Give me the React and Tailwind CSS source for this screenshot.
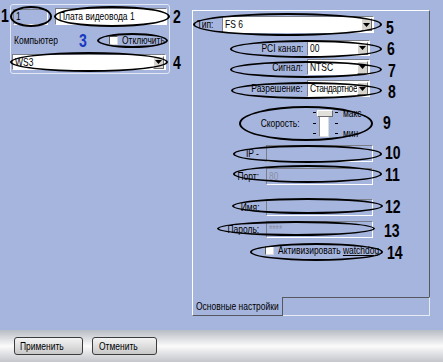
const ui = { fontFamily: '"Liberation Sans", Arial, sans-serif' };

// the reference uses a narrow UI face; squeeze Liberation Sans to match its widths
function T({ children, right, className = '' }) {
  return (
    <span
      className={`inline-block whitespace-nowrap text-[11px] leading-none scale-x-[0.77] ${right ? 'origin-right' : 'origin-left'} ${className}`}
    >
      {children}
    </span>
  );
}

function Sunken({ className = '', children }) {
  return (
    <div className={`shrink-0 border-t border-l border-[#7a7e88] border-b border-r border-b-white border-r-white flex items-center overflow-hidden ${className}`}>
      {children}
    </div>
  );
}

function Select({ value, tight, className = '' }) {
  return (
    <Sunken className={`bg-white ${className}`}>
      <span className="flex-1 min-w-0 pl-[2px] overflow-hidden flex">
        <T className={tight ? 'tracking-[-0.5px]' : ''}>{value}</T>
      </span>
      <span className="shrink-0 w-[11px] h-[13px] mr-[1px] bg-[#d6d4cc] border border-t-white border-l-white border-r-[#6c6c6c] border-b-[#6c6c6c] flex items-center justify-center">
        <svg width="7" height="4" viewBox="0 0 7 4"><path d="M0 0h7L3.5 4z" fill="#000" /></svg>
      </span>
    </Sunken>
  );
}

function Check({ label, className = '' }) {
  return (
    <div className={`shrink-0 flex items-center ${className}`}>
      <span className="shrink-0 w-[9px] h-[9px] bg-white border border-[#5c5c5c] border-b-[#d8d8d8] border-r-[#d8d8d8]" />
      <span className="shrink-0 ml-[4px] flex">
        <T>{label}</T>
      </span>
    </div>
  );
}

function Oval({ x, y, w, h }) {
  return (
    <div
      className="absolute border-2 border-black rounded-[50%] pointer-events-none"
      style={{ left: x, top: y, width: w, height: h }}
    />
  );
}

function Num({ x, y, children, blue }) {
  return (
    <span
      className={`absolute inline-block origin-left scale-x-[0.78] font-bold text-[18px] leading-none ${blue ? 'text-[#1838c0]' : 'text-black'}`}
      style={{ left: x, top: y }}
    >
      {children}
    </span>
  );
}

const ovals = [
  [10, 6, 42, 21], [54, 6, 116, 21], [97, 33, 71, 15], [10, 52, 158, 20],
  [193, 13, 189, 23], [230, 40, 152, 18], [230, 61, 152, 17], [231, 82, 151, 17],
  [239, 106, 134, 35], [233, 145, 149, 18], [233, 165, 149, 18], [232, 198, 151, 16],
  [217, 221, 158, 15], [250, 243, 133, 18],
];

const nums = [
  [1, 7, '1'], [173, 8, '2'], [79, 32, '3', true], [173, 54, '4'],
  [386, 19, '5'], [387, 40, '6'], [388, 62, '7'], [388, 83, '8'],
  [383, 114, '9'], [385, 144, '10'], [385, 166, '11'], [385, 198, '12'],
  [384, 222, '13'], [387, 244, '14'],
];

export default function App() {
  return (
    <div className="w-[443px] h-[362px] flex flex-col bg-[#a6b5dd] text-black relative overflow-hidden" style={ui}>
      <div className="h-[330px] flex items-start">
        {/* Left: channel panel */}
        <div className="shrink-0 mt-[4px] ml-[10px] w-[160px] h-[70px] border border-[#e2e8f6] rounded-[3px] px-[2px] pt-[3px]">
          <div className="flex items-center">
            <Sunken className="w-[35px] h-[16px] bg-[#a6b5dd] pl-[2px]">
              <T>1</T>
            </Sunken>
            <Sunken className="ml-[7px] w-[112px] h-[17px] bg-white pl-[3px]">
              <T>Плата видеовода 1</T>
            </Sunken>
          </div>
          <div className="mt-[8px] h-[14px] flex items-center">
            <span className="shrink-0 w-[96px] pl-[1px] flex">
              <T>Компьютер</T>
            </span>
            <Check label="Отключить" />
          </div>
          <Select value="WS3" className="mt-[7px] -ml-[1px] w-[154px] h-[16px]" />
        </div>

        {/* Right: settings tab control */}
        <div className="shrink-0 mt-[10px] ml-[22px] w-[238px] h-[306px] flex flex-col">
          <div className="h-[287px] border-t border-l border-white border-r border-r-[#55585f] pl-[4px]">
            <div className="mt-[5px] h-[17px] flex items-center">
              <span className="shrink-0 w-[25px] flex">
                <T>Тип:</T>
              </span>
              <Select value="FS 6" className="w-[152px] h-[17px]" />
            </div>
            {[['PCI канал:', '00', 7, 16], ['Сигнал:', 'NTSC', 3, 16], ['Разрешение:', 'Стандартное', 5, 17]].map(([l, v, mt, h]) => (
              <div key={l} className="flex items-center" style={{ marginTop: mt, height: h }}>
                <span className="shrink-0 w-[106px] flex justify-end">
                  <T right>{l}</T>
                </span>
                <Select value={v} tight={v.length > 6} className="ml-[4px] w-[63px] self-stretch" />
              </div>
            ))}

            <div className="mt-[10px] h-[33px] flex items-center">
              <span className="shrink-0 w-[103px] flex justify-end">
                <T right>Скорость:</T>
              </span>
              <div className="shrink-0 ml-[13px] relative w-[27px] h-[33px]">
                <div className="absolute left-[6px] top-[8px] w-[10px] h-[22px] bg-white border border-[#8a8a8a] border-b-[#dcdcdc] border-r-[#dcdcdc]" />
                <div className="absolute left-[4px] top-[3px] w-[16px] h-[7px] bg-[#e2e0da] border border-t-white border-l-white border-r-[#6c6c6c] border-b-[#6c6c6c]" />
                <span className="absolute left-0 top-[5px] w-[3px] h-px bg-black" />
                <span className="absolute left-0 top-[16px] w-[3px] h-px bg-black" />
                <span className="absolute left-0 top-[26px] w-[3px] h-px bg-black" />
                <span className="absolute left-[22px] top-[5px] w-[3px] h-px bg-black" />
                <span className="absolute left-[22px] top-[16px] w-[3px] h-px bg-black" />
                <span className="absolute left-[22px] top-[26px] w-[3px] h-px bg-black" />
              </div>
              <div className="shrink-0 ml-[3px] h-[33px] flex flex-col justify-between">
                <T className="mt-px">макс</T>
                <T className="mb-px">мин</T>
              </div>
            </div>

            {[['IP -', '', 5], ['Порт:', '80', 6], ['Имя:', '', 14], ['Пароль:', '****', 5]].map(([l, v, mt]) => (
              <div key={l} className="h-[17px] flex items-center" style={{ marginTop: mt }}>
                <span className="shrink-0 w-[62px] flex justify-end">
                  <T right>{l}</T>
                </span>
                <Sunken className="ml-[7px] w-[107px] h-[17px] bg-[#a6b5dd] pl-[2px]">
                  <T className="text-[#8a90a4]">{v}</T>
                </Sunken>
              </div>
            ))}

            <Check
              label={<>Активизировать <span className="underline">watchdog</span></>}
              className="mt-[7px] ml-[68px] h-[11px] w-fit"
            />
          </div>
          <div className="h-[19px] flex">
            <div className="shrink-0 w-[91px] border-l border-white border-r border-b border-r-[#55585f] border-b-[#55585f] flex items-center pl-[3px]">
              <T>Основные настройки</T>
            </div>
            <div className="flex-1 border-t border-[#55585f] border-r border-b border-r-[#e6eaf4] border-b-[#e6eaf4]" />
          </div>
        </div>
      </div>

      {/* Bottom: action bar */}
      <div className="flex-1 flex items-center gap-[9px] pl-[14px] bg-gradient-to-b from-[#b8bcc4] via-[#fbfbfb] to-[#c4c6cc]">
        <button className="w-[69px] h-[18px] rounded-[3px] border border-[#3c3c3c] bg-gradient-to-b from-[#f4f4f4] to-[#c8c8c8] flex items-center justify-center">
          <T className="origin-center">Применить</T>
        </button>
        <button className="w-[65px] h-[18px] rounded-[3px] border border-[#3c3c3c] bg-gradient-to-b from-[#f4f4f4] to-[#c8c8c8] flex items-center justify-center">
          <T className="origin-center">Отменить</T>
        </button>
      </div>

      {ovals.map(([x, y, w, h], i) => (
        <Oval key={i} x={x} y={y} w={w} h={h} />
      ))}
      {nums.map(([x, y, t, blue]) => (
        <Num key={t} x={x} y={y} blue={blue}>{t}</Num>
      ))}
    </div>
  );
}
